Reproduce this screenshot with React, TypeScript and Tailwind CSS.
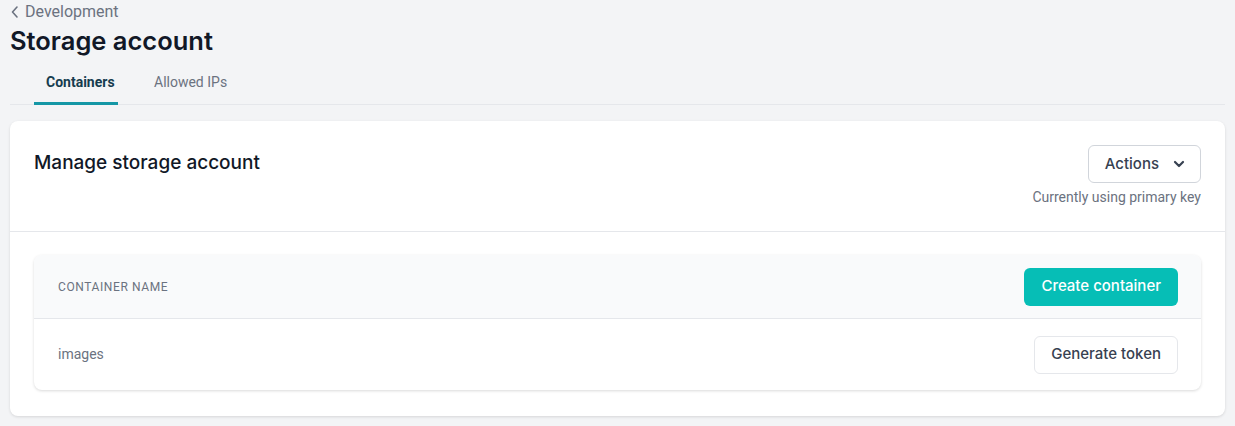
import React from "react";

const mont = { fontFamily: "Inter, 'Noto Sans', sans-serif" };

export default function App() {
  return (
    <div className="min-h-[426px] w-[1235px] bg-[#f3f4f6] px-[10px] pb-[10px] font-['Roboto',sans-serif]">
      <div className="flex items-center gap-[5px] pt-[2px] text-[16px] leading-[20px] text-[#6b7280]">
        <svg width="10" height="14" viewBox="0 0 10 14" fill="none">
          <path d="M7 2L2.5 7L7 12" stroke="#6b7280" strokeWidth="1.6" strokeLinecap="round" strokeLinejoin="round" />
        </svg>
        <span>Development</span>
      </div>
      <h1 className="mt-[5px] text-[25.5px] font-semibold leading-[28px] text-[#111827]" style={mont}>
        Storage account
      </h1>
      <div className="mt-[18px] flex border-b border-[#e5e7eb] pl-[24px]">
        <div className="-mb-[1px] w-[84px] border-b-[3px] border-[#1597a6] pb-[11px] pl-[12px] text-[14px] font-bold leading-[18px] text-[#163c4f]">
          Containers
        </div>
        <div className="ml-[36px] pb-[11px] text-[14px] leading-[18px] text-[#6b7280]">Allowed IPs</div>
      </div>

      <div className="mt-[16px] rounded-[8px] bg-white shadow-[0_1px_3px_rgba(0,0,0,0.12)]">
        <div className="flex items-start justify-between border-b border-[#e5e7eb] px-[24px] pb-[25px] pt-[24px]">
          <h2 className="mt-[6px] text-[19px] font-medium leading-[24px] text-[#111827]" style={mont}>
            Manage storage account
          </h2>
          <div className="flex flex-col items-end">
            <button
              className="flex h-[38px] items-center gap-[14px] rounded-[6px] border border-[#d1d5db] bg-white pl-[16px] pr-[15px] text-[15px] font-medium text-[#374151]"
              style={mont}
            >
              Actions
              <svg width="12" height="8" viewBox="0 0 12 8" fill="none">
                <path d="M2 2L6 6L10 2" stroke="#374151" strokeWidth="2.2" strokeLinecap="round" strokeLinejoin="round" />
              </svg>
            </button>
            <div className="mt-[5px] text-[14px] leading-[18px] text-[#6b7280]">Currently using primary key</div>
          </div>
        </div>
        <div className="px-[24px] pb-[26px] pt-[23px]">
          <div className="overflow-hidden rounded-[8px] bg-white shadow-[0_1px_3px_rgba(0,0,0,0.15)]">
            <div className="flex h-[64px] items-center justify-between border-b border-[#e5e7eb] bg-[#f9fafb] pl-[24px] pr-[23px]">
              <span className="text-[12px] uppercase tracking-[0.05em] text-[#6b7280]">Container name</span>
              <button
                className="h-[38px] rounded-[6px] bg-[#06beb6] px-[17px] text-[15px] font-medium text-white"
                style={mont}
              >
                Create container
              </button>
            </div>
            <div className="flex h-[71px] items-center justify-between pl-[24px] pr-[23px]">
              <span className="text-[14px] text-[#6b7280]">images</span>
              <button
                className="h-[38px] rounded-[6px] border border-[#e5e7eb] bg-white px-[16px] text-[15px] font-medium text-[#374151]"
                style={mont}
              >
                Generate token
              </button>
            </div>
          </div>
        </div>
      </div>
    </div>
  );
}
